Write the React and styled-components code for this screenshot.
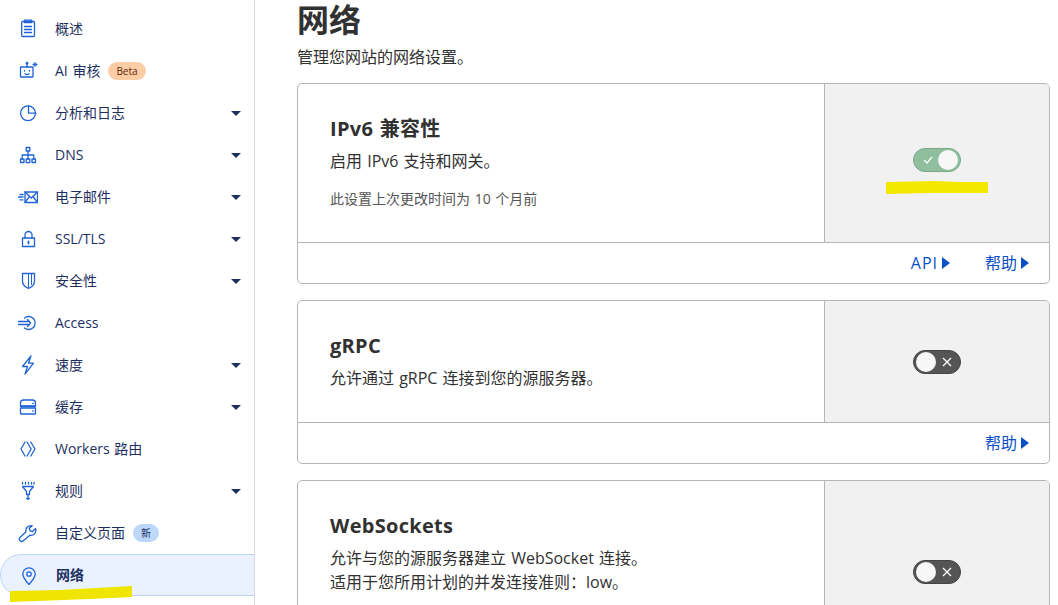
import styled, { createGlobalStyle } from "styled-components";

const GlobalStyle = createGlobalStyle`
  html, body {
    margin: 0;
    padding: 0;
    height: 100%;
    overflow: hidden;
    background: #fff;
    font-family: "Open Sans", "Noto Sans CJK SC", sans-serif;
    color: #313131;
    word-spacing: 1px;
  }
  * { box-sizing: border-box; }
`;

const Page = styled.div`
  display: flex;
  width: 1058px;
  height: 605px;
  overflow: hidden;
  position: relative;
`;

const Sidebar = styled.nav`
  flex: 0 0 255px;
  height: 605px;
  padding-top: 8px;
  border-right: 1px solid #d9d9d9;
  display: flex;
  flex-direction: column;
`;

const Item = styled.div`
  flex: 0 0 42px;
  display: flex;
  align-items: center;
  padding-left: 18px;
  padding-right: 13px;
  font-size: 14px;
  color: #1d2f5f;
  font-weight: ${(p) => (p.$active ? 700 : 400)};
  background: ${(p) => (p.$active ? "#e9f2fe" : "transparent")};
  border: ${(p) => (p.$active ? "1px solid #bdd7f8" : "none")};
  border-right: none;
  border-radius: ${(p) => (p.$active ? "21px 0 0 21px" : "0")};
`;

const IconSlot = styled.span`
  width: 20px;
  height: 20px;
  margin-right: 17px;
  color: #1f63d6;
  display: flex;
  align-items: center;
  justify-content: center;
`;

const Label = styled.span`
  white-space: nowrap;
  line-height: 20px;
`;

const Pill = styled.span`
  margin-left: 8px;
  height: 18px;
  padding: 0 8px;
  border-radius: 9px;
  font-size: 10px;
  line-height: 18px;
  color: ${(p) => p.$fg};
  background: ${(p) => p.$bg};
`;

const Caret = styled.span`
  margin-left: auto;
  width: 0;
  height: 0;
  border-left: 5px solid transparent;
  border-right: 5px solid transparent;
  border-top: 5px solid #1d2f5f;
`;

const Main = styled.main`
  flex: 1;
  padding: 0 8px 0 42px;
  min-width: 0;
`;

const Title = styled.h1`
  margin: 0;
  height: 42px;
  font-family: "Liberation Sans", "Noto Sans CJK SC", sans-serif;
  font-size: 32px;
  line-height: 42px;
  font-weight: 700;
  color: #313131;
`;

const Subtitle = styled.p`
  margin: 4px 0 15px;
  font-size: 16px;
  line-height: 22px;
  color: #313131;
`;

const Card = styled.section`
  border: 1px solid #b5b5b5;
  border-radius: 5px;
  margin-bottom: 16px;
  overflow: hidden;
`;

const CardBody = styled.div`
  display: flex;
  min-height: ${(p) => p.$height}px;
`;

const CardText = styled.div`
  flex: 1;
  padding: 31px 32px 0;
`;

const CardTitle = styled.h3`
  margin: 0 0 6px;
  font-size: 20px;
  line-height: 28px;
  font-weight: 700;
  letter-spacing: 0.3px;
  color: #313131;
`;

const CardLine = styled.p`
  margin: 0;
  font-size: 16px;
  line-height: 24px;
`;

const CardNote = styled.p`
  margin: 16px 0 0;
  font-size: 14px;
  line-height: 20px;
  color: #555;
`;

const ControlCol = styled.div`
  flex: 0 0 225px;
  background: #f1f1f1;
  border-left: 1px solid #b5b5b5;
  display: flex;
  justify-content: center;
  padding-top: ${(p) => p.$top}px;
`;

const Toggle = styled.div`
  width: 48px;
  height: 24px;
  border-radius: 12px;
  border: 1px solid ${(p) => (p.$on ? "#7aa88a" : "#444")};
  background: ${(p) => (p.$on ? "#8fbf9d" : "#555")};
  display: flex;
  flex-direction: ${(p) => (p.$on ? "row" : "row-reverse")};
  align-items: center;
  justify-content: space-between;
  padding: 0 ${(p) => (p.$on ? "2px" : "8px")} 0 ${(p) => (p.$on ? "9px" : "2px")};
  color: #fff;
`;

const Knob = styled.span`
  width: 20px;
  height: 20px;
  border-radius: 50%;
  background: #f7f7f7;
`;

const CardFooter = styled.div`
  height: 41px;
  border-top: 1px solid #b5b5b5;
  display: flex;
  justify-content: flex-end;
  align-items: center;
  gap: 35px;
  padding-right: 20px;
`;

const FootLink = styled.a`
  display: flex;
  align-items: center;
  gap: 4px;
  font-size: 16px;
  line-height: 22px;
  padding-bottom: 1px;
  letter-spacing: ${(p) => (p.$wide ? "1px" : "0")};
  color: #0a4fc4;
  &::after {
    content: "";
    border-left: 8px solid #0a4fc4;
    border-top: 6px solid transparent;
    border-bottom: 6px solid transparent;
  }
`;

const Highlight = styled.svg`
  position: absolute;
  left: 0;
  top: 0;
  pointer-events: none;
`;

const S = ({ children }) => (
  <svg width="20" height="20" viewBox="0 0 20 20" fill="none" stroke="currentColor" strokeWidth="1.3" strokeLinecap="round" strokeLinejoin="round">
    {children}
  </svg>
);

const icons = {
  overview: <S><rect x="3.7" y="2.5" width="12.800" height="15" rx="1" /><rect x="6.500" y="1.200" width="7.200" height="2.300" /><path d="M6.500 7.500h7M6.500 10.500h7M6.500 13.500h7" /></S>,
  bot: <S><rect x="2.500" y="6" width="12.500" height="10" rx="0.500" /><path d="M9 6V3" /><circle cx="9" cy="2.300" r="0.800" /><path d="M6.500 9.500v.5M11.500 9.500v.5M7 12.800c1 .8 3 .8 4 0" /><path d="M17 1.500v4M15 3.500h4M15.600 2.100l2.800 2.800M18.400 2.100l-2.800 2.800" strokeWidth="1" /></S>,
  pie: <S><circle cx="10" cy="10.200" r="7.400" /><path d="M10.500 2.800v7.400h7.400" /></S>,
  dns: <S><rect x="8.200" y="2.500" width="3.600" height="3.600" /><rect x="2.500" y="14" width="3.500" height="3.500" /><rect x="8.200" y="14" width="3.600" height="3.600" /><rect x="14" y="14" width="3.500" height="3.500" /><path d="M10 6v8M4.200 14v-4h11.600v4" /></S>,
  mail: <S><rect x="7" y="5" width="12.500" height="10.500" /><path d="M7 5l6.300 6L19.500 5M7 15.500l4.500-6M19.500 15.500l-4.500-6M2 7.500h3M0.500 10h4.500M2 12.800h3" /></S>,
  lock: <S><rect x="4.500" y="9" width="12" height="8.500" /><path d="M7 9V6a3.500 3.500 0 0 1 7 0v3" /><path d="M10.500 12.500v2" strokeWidth="1.800" /></S>,
  shield: <S><path d="M4.500 2.500h12v7.500c0 3.500-3 6.200-6 7.500-3-1.300-6-4-6-7.500z" /><path d="M10.500 2.500v15M13.500 2.500v11" strokeWidth="1" /></S>,
  access: <S><path d="M6.500 5a6.500 6.500 0 1 1 0 10" /><path d="M0.500 8.500h11M0.500 11.500h11M9.500 6.500l3 3.500-3 3.500" /></S>,
  bolt: <S><path d="M13 0.800L4.500 11.500h5L7 19.200 15.500 8.200h-5z" /></S>,
  cache: <S><path d="M2.500 9V6q0-3 3-3h9q3 0 3 3v3z" /><rect x="2.500" y="11" width="15" height="6" rx="0.500" /><path d="M2.500 9.500h15M14.800 6.500h.5M14.800 14h.5" /></S>,
  workers: <S><path d="M7 3L3 10l4 7M9 3l4.200 7L9 17M12.800 3L17 10l-4.200 7" /></S>,
  rules: <S><path d="M4.500 5.500h11l-4 5v3h-3v-3z" /><path d="M10 13.500v5M8.700 17.500h2.600" /><path d="M4.500 1.500v1.500M7.500 1.500v1.500M10.500 1.500v1.500M13.500 1.500v1.500M16 1.500v1.500" /></S>,
  wrench: <S><path d="M17.500 5.500l-3 3-2.500-.7-.7-2.500 3-2.500a5 5 0 0 0-6.300 6L2 14.500a2.300 2.300 0 0 0 3.300 3.200l6.500-5.500A5 5 0 0 0 17.500 5.500z" /></S>,
  pin: <S><path d="M10 19.500C6 15 3.800 12 3.800 9a6.200 6.200 0 0 1 12.400 0c0 3-2.200 6-6.200 10.500z" /><circle cx="10" cy="9" r="2.200" /></S>,
};

const navItems = [
  { icon: "overview", label: "概述" },
  { icon: "bot", label: "AI 审核", pill: { text: "Beta", fg: "#5e2a0a", bg: "#fbcda5" } },
  { icon: "pie", label: "分析和日志", caret: true },
  { icon: "dns", label: "DNS", caret: true },
  { icon: "mail", label: "电子邮件", caret: true },
  { icon: "lock", label: "SSL/TLS", caret: true },
  { icon: "shield", label: "安全性", caret: true },
  { icon: "access", label: "Access" },
  { icon: "bolt", label: "速度", caret: true },
  { icon: "cache", label: "缓存", caret: true },
  { icon: "workers", label: "Workers 路由" },
  { icon: "rules", label: "规则", caret: true },
  { icon: "wrench", label: "自定义页面", pill: { text: "新", fg: "#1d2f5f", bg: "#bcd7fa" } },
  { icon: "pin", label: "网络", active: true },
];

const Check = () => (
  <svg width="10" height="8" viewBox="0 0 10 8" fill="none" stroke="#fff" strokeWidth="1.200">
    <path d="M1 4l3 3 5-6" />
  </svg>
);

const Cross = () => (
  <svg width="10" height="10" viewBox="0 0 10 10" fill="none" stroke="#fff" strokeWidth="1.300">
    <path d="M1 1l8 8M9 1l-8 8" />
  </svg>
);

export default function App() {
  return (
    <Page>
      <GlobalStyle />
      <Sidebar>
        {navItems.map((item) => (
          <Item key={item.label} $active={item.active}>
            <IconSlot>{icons[item.icon]}</IconSlot>
            <Label>{item.label}</Label>
            {item.pill && <Pill $fg={item.pill.fg} $bg={item.pill.bg}>{item.pill.text}</Pill>}
            {item.caret && <Caret />}
          </Item>
        ))}
      </Sidebar>
      <Main>
        <Title>网络</Title>
        <Subtitle>管理您网站的网络设置。</Subtitle>
        <Card>
          <CardBody $height={158}>
            <CardText>
              <CardTitle>IPv6 兼容性</CardTitle>
              <CardLine>启用 IPv6 支持和网关。</CardLine>
              <CardNote>此设置上次更改时间为 10 个月前</CardNote>
            </CardText>
            <ControlCol $top={64}>
              <Toggle $on><Check /><Knob /></Toggle>
            </ControlCol>
          </CardBody>
          <CardFooter>
            <FootLink $wide>API</FootLink>
            <FootLink>帮助</FootLink>
          </CardFooter>
        </Card>
        <Card>
          <CardBody $height={121}>
            <CardText>
              <CardTitle>gRPC</CardTitle>
              <CardLine>允许通过 gRPC 连接到您的源服务器。</CardLine>
            </CardText>
            <ControlCol $top={49}>
              <Toggle><Cross /><Knob /></Toggle>
            </ControlCol>
          </CardBody>
          <CardFooter>
            <FootLink>帮助</FootLink>
          </CardFooter>
        </Card>
        <Card>
          <CardBody $height={160}>
            <CardText>
              <CardTitle>WebSockets</CardTitle>
              <CardLine>允许与您的源服务器建立 WebSocket 连接。</CardLine>
              <CardLine>适用于您所用计划的并发连接准则：low。</CardLine>
            </CardText>
            <ControlCol $top={79}>
              <Toggle><Cross /><Knob /></Toggle>
            </ControlCol>
          </CardBody>
        </Card>
      </Main>
      <Highlight width="1058" height="605" viewBox="0 0 1058 605">
        <path d="M886 182 L935 181 L960 182 L988 182 L988 193 L930 193 L886 194 Z" fill="#f4e800" />
        <path d="M10 591 L60 590 L132 586 L132 597 L90 599 L10 602 Z" fill="#f0e500" />
      </Highlight>
    </Page>
  );
}
